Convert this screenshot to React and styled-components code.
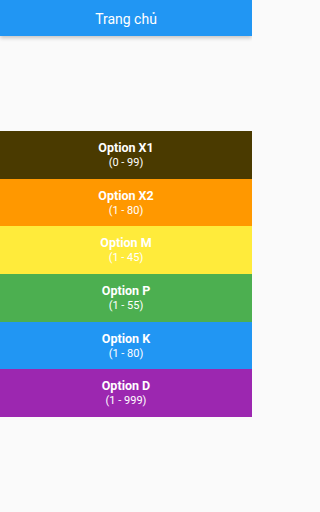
import React from 'react';
import styled, { createGlobalStyle } from 'styled-components';

const GlobalStyle = createGlobalStyle`
  html, body {
    margin: 0;
    padding: 0;
    background-color: #fafafa;
    font-family: Roboto, "Liberation Sans", sans-serif;
  }
`;

const Screen = styled.div`
  width: 252px;
  height: 512px;
  display: flex;
  flex-direction: column;
  background-color: #fafafa;
  overflow: hidden;
`;

const AppBar = styled.header`
  height: 36px;
  flex-shrink: 0;
  background-color: #2196f3;
  color: #fff;
  display: flex;
  align-items: center;
  justify-content: center;
  font-size: 14px;
  padding-top: 1px;
  box-sizing: border-box;
  box-shadow: 0 2px 4px rgba(0, 0, 0, 0.22);
  position: relative;
  z-index: 1;
`;

const Body = styled.main`
  flex: 1;
  display: flex;
  flex-direction: column;
  justify-content: center;
`;

const Band = styled.div`
  background-color: ${(p) => p.color};
  color: #fff;
  padding: 9px 0 8px;
  display: flex;
  flex-direction: column;
  align-items: center;
`;

const Title = styled.div`
  font-size: 12.5px;
  font-weight: 700;
  line-height: 16px;
`;

const Range = styled.div`
  font-size: 11px;
  line-height: 14.6px;
`;

const options = [
  { name: 'Option X1', range: '(0 - 99)', color: '#4a3a00' },
  { name: 'Option X2', range: '(1 - 80)', color: '#ff9800' },
  { name: 'Option M', range: '(1 - 45)', color: '#ffeb3b' },
  { name: 'Option P', range: '(1 - 55)', color: '#4caf50' },
  { name: 'Option K', range: '(1 - 80)', color: '#2196f3' },
  { name: 'Option D', range: '(1 - 999)', color: '#9c27b0' },
];

const App = () => (
  <>
    <GlobalStyle />
    <Screen>
      <AppBar>Trang chủ</AppBar>
      <Body>
        {options.map((o) => (
          <Band key={o.name} color={o.color}>
            <Title>{o.name}</Title>
            <Range>{o.range}</Range>
          </Band>
        ))}
      </Body>
    </Screen>
  </>
);

export default App;
